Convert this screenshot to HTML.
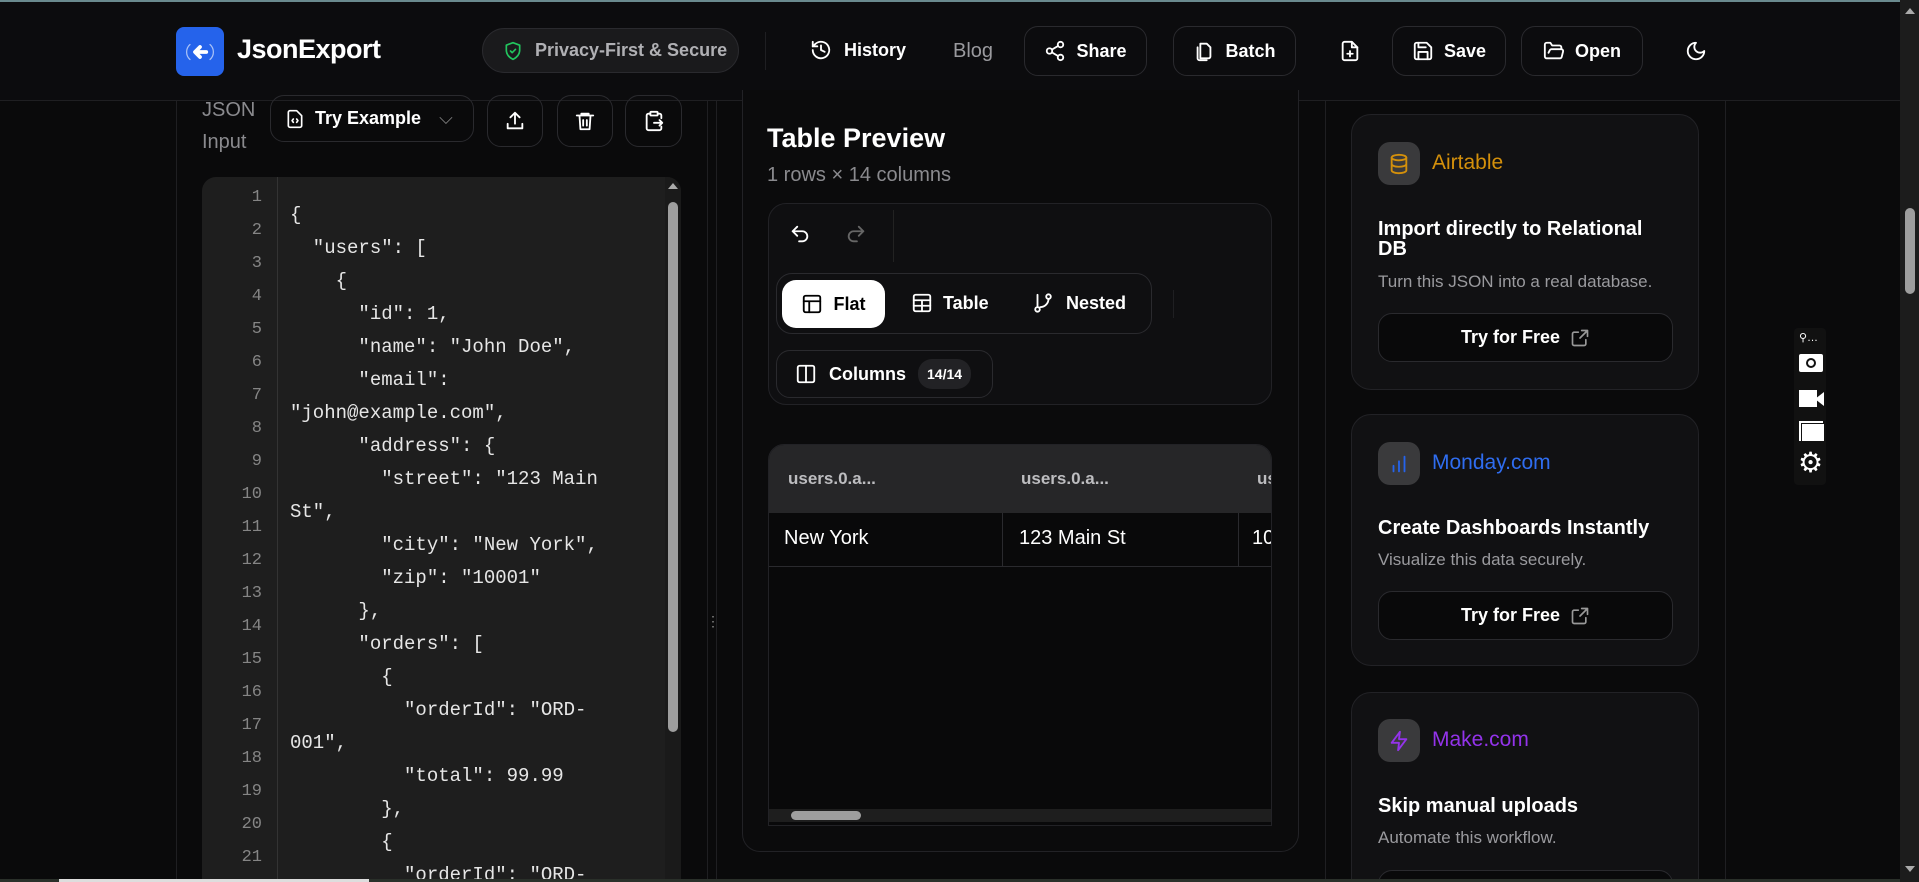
<!DOCTYPE html>
<html style="overflow:hidden;height:882px"><head><meta charset="utf-8"><style>
*{box-sizing:border-box;margin:0;padding:0}
html,body{width:1919px;height:882px;overflow:hidden}
body{background:#0a0a0b;font-family:"Liberation Sans",sans-serif;color:#fff;position:relative}
#w{position:absolute;left:0;top:0;width:1919px;height:882px;overflow:hidden}
.a{position:absolute}
.hdr{left:0;top:0;width:1900px;height:101px;background:#0c0c0e;border-bottom:1px solid #1f1f22;border-top:2px solid #6a8a8e}
.btn{position:absolute;border:1px solid #2a2a2e;border-radius:14px;display:flex;align-items:center;justify-content:center;gap:10px;font-weight:bold;font-size:18px;color:#fff}
svg{fill:none;stroke:currentColor;stroke-width:2;stroke-linecap:round;stroke-linejoin:round}
.vl{position:absolute;width:1px;background:#1f1f22}
.code{font-family:"Liberation Mono",monospace;font-size:19px;line-height:33px;color:#e6e6e6;white-space:pre}
.ln{font-family:"Liberation Mono",monospace;font-size:17px;line-height:33px;color:#858585;text-align:right}
.card{position:absolute;left:1351px;width:348px;background:#111113;border:1px solid #222226;border-radius:20px}
.ic{position:absolute;left:26px;width:42px;height:43px;border-radius:12px;background:#3a3a3c;display:flex;align-items:center;justify-content:center}
.cl{position:absolute;left:80px;font-size:21px}
.ch{position:absolute;left:26px;font-size:20px;font-weight:bold;line-height:20px;width:290px}
.cs{position:absolute;left:26px;font-size:17px;color:#9a9a9e}
.cb{position:absolute;left:26px;width:295px;height:49px;border:1px solid #2a2a2e;border-radius:14px;background:#09090a;display:flex;align-items:center;justify-content:center;gap:10px;font-weight:bold;font-size:18px}
</style></head><body><div id="w">
<div class="a hdr"></div>
<div class="a" style="left:176px;top:27px;width:48px;height:49px;background:#2563eb;border-radius:8px;display:flex;align-items:center;justify-content:center">
<svg width="30" height="30" viewBox="0 0 24 24" style="stroke:#fff"><path d="M4 6a8 8 0 0 0 0 12" stroke-width="1" opacity=".6"/><path d="M20 6a8 8 0 0 1 0 12" stroke-width="1" opacity=".6"/><path d="M17 12H9M12 8l-4 4 4 4" stroke-width="3"/></svg></div>
<div class="a" style="left:237px;top:34px;font-size:27px;font-weight:bold;letter-spacing:-0.5px">JsonExport</div>
<div class="a" style="left:482px;top:28px;width:257px;height:45px;border-radius:23px;background:#1a1a1c;border:1px solid #2a2a2e;display:flex;align-items:center;gap:12px;padding-left:20px;color:#b0b0b4;font-size:18px;font-weight:bold">
<svg width="20" height="20" viewBox="0 0 24 24" style="stroke:#22c55e"><path d="M12 2l8 3v6c0 5-3.5 9-8 11-4.5-2-8-6-8-11V5z"/><path d="M9 12l2 2 4-4"/></svg>Privacy-First &amp; Secure</div>
<div class="vl" style="left:765px;top:32px;height:38px"></div>
<div class="a" style="left:810px;top:39px;display:flex;align-items:center;gap:12px;font-weight:bold;font-size:18px"><svg width="22" height="22" viewBox="0 0 24 24"><path d="M3 12a9 9 0 1 0 3-6.7L3 8"/><path d="M3 3v5h5M12 7v5l4 2"/></svg>History</div>
<div class="a" style="left:953px;top:40px;font-size:20px;color:#9a9a9e">Blog</div>
<div class="btn" style="left:1024px;top:26px;width:123px;height:50px"><svg width="22" height="22" viewBox="0 0 24 24"><circle cx="18" cy="5" r="3"/><circle cx="6" cy="12" r="3"/><circle cx="18" cy="19" r="3"/><path d="M8.6 13.5l6.8 4M15.4 6.5l-6.8 4"/></svg>Share</div>
<div class="btn" style="left:1173px;top:26px;width:123px;height:50px"><svg width="22" height="22" viewBox="0 0 24 24"><path d="M8 4h7l4 4v10a2 2 0 0 1-2 2H8z"/><path d="M5 8v12a2 2 0 0 0 2 2h8"/></svg>Batch</div>
<div class="a" style="left:1339px;top:39px"><svg width="22" height="24" viewBox="0 0 24 24"><path d="M14 2H6a2 2 0 0 0-2 2v16a2 2 0 0 0 2 2h12a2 2 0 0 0 2-2V8z"/><path d="M14 2v6h6M12 12v6M9 15h6"/></svg></div>
<div class="btn" style="left:1392px;top:26px;width:114px;height:50px"><svg width="22" height="22" viewBox="0 0 24 24"><path d="M19 21H5a2 2 0 0 1-2-2V5a2 2 0 0 1 2-2h11l5 5v11a2 2 0 0 1-2 2z"/><path d="M17 21v-8H7v8M7 3v5h8"/></svg>Save</div>
<div class="btn" style="left:1521px;top:26px;width:122px;height:50px"><svg width="22" height="22" viewBox="0 0 24 24"><path d="M6 14l1.5-3A2 2 0 0 1 9.2 10H20a2 2 0 0 1 1.9 2.5l-1.5 6A2 2 0 0 1 18.4 20H4a2 2 0 0 1-2-2V5a2 2 0 0 1 2-2h4l2 3h8a2 2 0 0 1 2 2v2"/></svg>Open</div>
<div class="a" style="left:1685px;top:40px"><svg width="22" height="22" viewBox="0 0 24 24"><path d="M12 3a6 6 0 0 0 9 9 9 9 0 1 1-9-9z"/></svg></div>

<div class="vl" style="left:176px;top:101px;height:781px"></div>
<div class="vl" style="left:707px;top:101px;height:781px"></div>
<div class="vl" style="left:716px;top:101px;height:781px"></div>
<div class="vl" style="left:1325px;top:101px;height:781px"></div>
<div class="vl" style="left:1725px;top:101px;height:781px"></div>
<div class="a" style="left:706px;top:614px;color:#888;font-size:14px;line-height:14px">⋮</div>

<div class="a" style="left:202px;top:94px;font-size:20px;color:#8a8a8e;line-height:32px">JSON<br>Input</div>
<div class="btn" style="left:270px;top:95px;width:204px;height:47px;justify-content:flex-start;padding-left:14px"><svg width="20" height="22" viewBox="0 0 24 24"><path d="M14 2H6a2 2 0 0 0-2 2v16a2 2 0 0 0 2 2h12a2 2 0 0 0 2-2V8z"/><path d="M10 12l-1.5 2 1.5 2M14 12l1.5 2-1.5 2"/></svg>Try Example<span style="color:#888;font-weight:normal;margin-left:8px">⌵</span></div>
<div class="btn" style="left:487px;top:95px;width:56px;height:52px"><svg width="22" height="22" viewBox="0 0 24 24"><path d="M12 3v12M7 8l5-5 5 5M4 15v5h16v-5"/></svg></div>
<div class="btn" style="left:557px;top:95px;width:56px;height:52px"><svg width="22" height="22" viewBox="0 0 24 24"><path d="M3 6h18M8 6V4h8v2M6 6l1 15h10l1-15M10 11v6M14 11v6"/></svg></div>
<div class="btn" style="left:625px;top:95px;width:57px;height:52px"><svg width="22" height="22" viewBox="0 0 24 24"><path d="M16 4h2a2 2 0 0 1 2 2v3M8 4H6a2 2 0 0 0-2 2v14a2 2 0 0 0 2 2h12a2 2 0 0 0 2-2v-2"/><rect x="8" y="2" width="8" height="4" rx="1"/><path d="M12 14h9M18 11l3 3-3 3"/></svg></div>
<div class="a" style="left:202px;top:177px;width:479px;height:720px;background:#1e1e1e;border-radius:14px;overflow:hidden">
<div class="a" style="left:0;top:0;width:76px;height:720px;border-right:1px solid #333"></div>
<div class="a ln" style="left:0;top:4px;width:60px">1<br>2<br>3<br>4<br>5<br>6<br>7<br>8<br>9<br>10<br>11<br>12<br>13<br>14<br>15<br>16<br>17<br>18<br>19<br>20<br>21<br>22</div>
<div class="a code" style="left:88px;top:22px">{
  "users": [
    {
      "id": 1,
      "name": "John Doe",
      "email":
"john@example.com",
      "address": {
        "street": "123 Main
St",
        "city": "New York",
        "zip": "10001"
      },
      "orders": [
        {
          "orderId": "ORD-
001",
          "total": 99.99
        },
        {
          "orderId": "ORD-</div>
<div class="a" style="left:463px;top:0;width:16px;height:720px;background:#1a1a1a"></div>
<div class="a" style="left:466px;top:6px;width:0;height:0;border-left:5px solid transparent;border-right:5px solid transparent;border-bottom:6px solid #aaa"></div>
<div class="a" style="left:466px;top:25px;width:10px;height:530px;background:#9e9e9e;border-radius:5px"></div>
</div>

<div class="a" style="left:742px;top:90px;width:557px;height:762px;border:1px solid #222226;border-top:none;border-radius:0 0 18px 18px;background:#0b0b0c"></div>
<div class="a" style="left:767px;top:123px;font-size:27px;font-weight:bold">Table Preview</div>
<div class="a" style="left:767px;top:164px;font-size:20px;color:#8a8a8e">1 rows × 14 columns</div>
<div class="a" style="left:768px;top:203px;width:504px;height:202px;border:1px solid #222226;border-radius:18px;background:#0f0f11"></div>
<div class="a" style="left:789px;top:223px"><svg width="22" height="22" viewBox="0 0 24 24"><path d="M9 14L4 9l5-5"/><path d="M4 9h10.5a5.5 5.5 0 0 1 0 11H11"/></svg></div>
<div class="a" style="left:845px;top:223px;color:#666"><svg width="22" height="22" viewBox="0 0 24 24"><path d="M15 14l5-5-5-5"/><path d="M20 9H9.5a5.5 5.5 0 0 0 0 11H13"/></svg></div>
<div class="vl" style="left:893px;top:210px;height:52px;background:#222"></div>
<div class="a" style="left:776px;top:273px;width:376px;height:61px;border:1px solid #2a2a2e;border-radius:16px"></div>
<div class="a" style="left:782px;top:280px;width:103px;height:48px;background:#fff;border-radius:14px;color:#000;display:flex;align-items:center;justify-content:center;gap:10px;font-weight:bold;font-size:18px"><svg width="22" height="22" viewBox="0 0 24 24"><rect x="3" y="3" width="18" height="18" rx="2"/><path d="M3 9h18M9 9v12"/></svg>Flat</div>
<div class="a" style="left:911px;top:292px;display:flex;align-items:center;gap:10px;font-weight:bold;font-size:18px"><svg width="22" height="22" viewBox="0 0 24 24"><rect x="3" y="3" width="18" height="18" rx="2"/><path d="M3 9h18M3 15h18M12 9v12"/></svg>Table</div>
<div class="a" style="left:1032px;top:292px;display:flex;align-items:center;gap:12px;font-weight:bold;font-size:18px"><svg width="22" height="22" viewBox="0 0 24 24"><circle cx="6" cy="19" r="2.5"/><circle cx="18" cy="5" r="2.5"/><path d="M6 3v13.5M18 7.5a9 9 0 0 1-9 9"/></svg>Nested</div>
<div class="vl" style="left:1173px;top:290px;height:28px;background:#1f1f22"></div>
<div class="a" style="left:776px;top:350px;width:217px;height:48px;border:1px solid #2a2a2e;border-radius:14px;display:flex;align-items:center;gap:12px;padding-left:18px;font-weight:bold;font-size:18px"><svg width="22" height="22" viewBox="0 0 24 24"><rect x="3" y="3" width="18" height="18" rx="2"/><path d="M12 3v18"/></svg>Columns<span style="background:#222225;border-radius:14px;padding:7px 9px;font-size:14px">14/14</span></div>
<div class="a" style="left:768px;top:444px;width:504px;height:382px;border:1px solid #222226;border-radius:16px 16px 0 0;overflow:hidden;background:#09090a">
<div class="a" style="left:0;top:0;width:504px;height:68px;background:#262628"></div>
<div class="a" style="left:19px;top:24px;font-weight:bold;font-size:17px;color:#bdbdc0">users.0.a...</div>
<div class="a" style="left:252px;top:24px;font-weight:bold;font-size:17px;color:#bdbdc0">users.0.a...</div>
<div class="a" style="left:488px;top:24px;font-weight:bold;font-size:17px;color:#bdbdc0">us</div>
<div class="a" style="left:0;top:121px;width:504px;height:1px;background:#2a2a2e"></div>
<div class="a" style="left:233px;top:68px;width:1px;height:53px;background:#2a2a2e"></div>
<div class="a" style="left:469px;top:68px;width:1px;height:53px;background:#2a2a2e"></div>
<div class="a" style="left:15px;top:82px;font-size:20px">New York</div>
<div class="a" style="left:250px;top:82px;font-size:20px">123 Main St</div>
<div class="a" style="left:483px;top:82px;font-size:20px">10</div>
<div class="a" style="left:0;top:364px;width:504px;height:13px;background:#1e1e1e"></div>
<div class="a" style="left:22px;top:366px;width:70px;height:9px;background:#9e9e9e;border-radius:5px"></div>
</div>

<div class="card" style="top:114px;height:276px">
<div class="ic" style="top:27px"><svg width="22" height="24" viewBox="0 0 24 24" style="stroke:#d4900b"><ellipse cx="12" cy="5" rx="8" ry="3"/><path d="M4 5v14c0 1.7 3.6 3 8 3s8-1.3 8-3V5M4 12c0 1.7 3.6 3 8 3s8-1.3 8-3"/></svg></div>
<div class="cl" style="top:36px;color:#d4900b">Airtable</div>
<div class="ch" style="top:104px;width:270px">Import directly to Relational DB</div>
<div class="cs" style="top:157px">Turn this JSON into a real database.</div>
<div class="cb" style="top:198px">Try for Free<svg width="20" height="20" viewBox="0 0 24 24" style="stroke:#999"><path d="M14 3h7v7M21 3l-9 9M19 14v5a2 2 0 0 1-2 2H5a2 2 0 0 1-2-2V7a2 2 0 0 1 2-2h5"/></svg></div>
</div>
<div class="card" style="top:414px;height:252px">
<div class="ic" style="top:27px"><svg width="22" height="22" viewBox="0 0 24 24" style="stroke:#2563eb"><path d="M6 20v-6M12 20V9M18 20V4"/></svg></div>
<div class="cl" style="top:36px;color:#2f6df0">Monday.com</div>
<div class="ch" style="top:103px">Create Dashboards Instantly</div>
<div class="cs" style="top:135px">Visualize this data securely.</div>
<div class="cb" style="top:176px">Try for Free<svg width="20" height="20" viewBox="0 0 24 24" style="stroke:#999"><path d="M14 3h7v7M21 3l-9 9M19 14v5a2 2 0 0 1-2 2H5a2 2 0 0 1-2-2V7a2 2 0 0 1 2-2h5"/></svg></div>
</div>
<div class="card" style="top:692px;height:220px">
<div class="ic" style="top:26px"><svg width="22" height="22" viewBox="0 0 24 24" style="stroke:#9333ea"><path d="M13 2L4 14h8l-1 8 9-12h-8z"/></svg></div>
<div class="cl" style="top:35px;color:#9333ea">Make.com</div>
<div class="ch" style="top:103px">Skip manual uploads</div>
<div class="cs" style="top:135px">Automate this workflow.</div>
<div class="cb" style="top:177px"></div>
</div>

<div class="a" style="left:1794px;top:328px;width:32px;height:157px;background:#111;border-radius:4px"></div>
<div class="a" style="left:1799px;top:331px;font-size:11px;color:#fff">⚲…</div>
<div class="a" style="left:1799px;top:354px;width:24px;height:18px;background:#fff;border-radius:2px"><div class="a" style="left:7px;top:4px;width:10px;height:10px;border:2px solid #111;border-radius:50%"></div></div>
<div class="a" style="left:1799px;top:390px;width:18px;height:17px;background:#fff"></div>
<div class="a" style="left:1815px;top:392px;width:0;height:0;border-top:7px solid transparent;border-bottom:7px solid transparent;border-right:9px solid #fff"></div>
<div class="a" style="left:1799px;top:421px;width:24px;height:20px;border-left:2px solid #fff;border-top:2px solid #fff"></div>
<div class="a" style="left:1802px;top:424px;width:22px;height:17px;background:#fff"></div>
<div class="a" style="left:1798px;top:449px;font-size:28px;line-height:28px;color:#fff">⚙</div>

<div class="a" style="left:1900px;top:0;width:19px;height:882px;background:#1c1c1c"></div>
<div class="a" style="left:1905px;top:8px;width:0;height:0;border-left:5px solid transparent;border-right:5px solid transparent;border-bottom:6px solid #aaa"></div>
<div class="a" style="left:1905px;top:208px;width:10px;height:86px;background:#9e9e9e;border-radius:5px"></div>
<div class="a" style="left:1905px;top:866px;width:0;height:0;border-left:5px solid transparent;border-right:5px solid transparent;border-top:6px solid #aaa"></div>
<div class="a" style="left:0;top:879px;width:1900px;height:3px;background:#2a302a"></div>
<div class="a" style="left:59px;top:879px;width:310px;height:3px;background:#ddd"></div>
</div></body></html>
